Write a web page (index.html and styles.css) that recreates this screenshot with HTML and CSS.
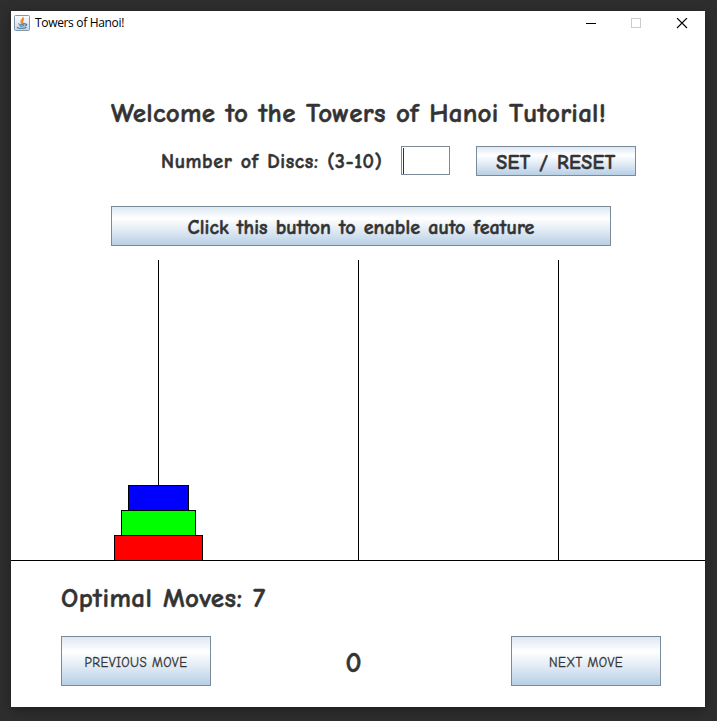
FILE: index.html
```html
<!DOCTYPE html>
<html lang="en">
<head>
<meta charset="utf-8">
<title>Towers of Hanoi!</title>
<link rel="stylesheet" href="styles.css">
</head>
<body>
<div class="window">
  <header class="titlebar">
    <svg class="app-icon" width="16" height="16" viewBox="0 0 16 16">
      <defs><linearGradient id="tile" x2="0" y2="1"><stop offset="0" stop-color="#fff"/><stop offset="1" stop-color="#c3d5e3"/></linearGradient></defs>
      <rect x=".5" y=".5" width="15" height="15" rx="1" fill="url(#tile)" stroke="#8299ac"/>
      <path d="M9 2c1 2-3 3-2 5l1 1M10 4C8 5 8 6 9 8" fill="none" stroke="#ee8227" stroke-width="1.2"/>
      <path d="M5 8.500c-1 1 5 1 6 0M5.500 10.500c1 .7 3 .7 4.500 0M3.500 12c-1 1.700 8 1.700 9 .3M11 9c3-.5 1.500 2-.5 2" fill="none" stroke="#41708f" stroke-width="1.100"/>
    </svg>
    <span class="caption">Towers of Hanoi!</span>
    <svg class="controls" width="103" height="11" viewBox="0 0 103 11" shape-rendering="crispEdges">
      <path d="M0 5.500h10" stroke="#000"/>
      <rect x="45.500" y=".5" width="9" height="9" fill="none" stroke="#ccc"/>
      <path d="M91 0l10 10M101 0L91 10" stroke="#000" stroke-width="1.100" shape-rendering="auto"/>
    </svg>
  </header>
  <main>
    <h1 class="title">Welcome to the Towers of Hanoi Tutorial!</h1>
    <div class="settings">
      <label class="discs-label" for="discs">Number of Discs: (3-10)</label>
      <div class="field" id="discs"><span class="caret"></span></div>
      <button class="button set"><span>SET / RESET</span></button>
    </div>
    <button class="button auto"><span>Click this button to enable auto feature</span></button>
    <section class="board">
      <div class="tower">
        <div class="peg"></div>
        <div class="disc blue"></div>
        <div class="disc green"></div>
        <div class="disc red"></div>
      </div>
      <div class="tower"><div class="peg"></div></div>
      <div class="tower"><div class="peg"></div></div>
    </section>
    <div class="optimal">Optimal Moves: 7</div>
    <div class="moves">
      <button class="button move"><span class="prev">PREVIOUS MOVE</span></button>
      <span class="count">0</span>
      <button class="button move"><span class="next">NEXT MOVE</span></button>
    </div>
  </main>
</div>
</body>
</html>
```
FILE: styles.css
```css
* { box-sizing: border-box; }
body {
  margin: 0;
  height: 721px;
  padding: 11px 12px 14px 11px;
  overflow: hidden;
  background: #2e2e2e;
  color: #333;
  font-family: "Comic Sans MS", "Comic Neue", "Noto Sans", sans-serif;
  font-weight: 700;
  -webkit-text-stroke: .5px #333;
}
.window {
  width: 694px;
  height: 696px;
  background: #fff;
  box-shadow: 0 3px 12px rgba(0, 0, 0, .35);
}
.titlebar {
  display: flex;
  align-items: center;
  height: 24px;
  padding-left: 3px;
  color: #000;
  font: 12px/16px "Segoe UI", "Open Sans", sans-serif;
  -webkit-text-stroke: 0;
}
.caption { margin-left: 5px; letter-spacing: -.33px; white-space: nowrap; }
.controls { margin: 0 16px 0 auto; }
.title {
  margin: 60px 0 0 100px;
  font-size: 27px;
  line-height: 38px;
  letter-spacing: .25px;
  word-spacing: .4px;
  white-space: nowrap;
}
.settings {
  display: flex;
  height: 30px;
  margin: 13px 0 0 150px;
}
.discs-label {
  width: 240px;
  font-size: 20px;
  line-height: 32px;
  letter-spacing: .6px;
  word-spacing: .8px;
  white-space: nowrap;
}
.field {
  width: 49px;
  height: 29px;
  padding: 1px;
  border: 1px solid #7a8a99;
}
.caret { display: block; width: 1px; height: 26px; background: #333; }
.button {
  display: flex;
  align-items: center;
  justify-content: center;
  padding: 0;
  border: 1px solid #7a8a99;
  border-radius: 0;
  background: linear-gradient(#dde8f3, #fff 30%, #dde8f3 65%, #b8cfe5);
  color: #333;
  font: inherit;
  font-size: 20px;
  line-height: 24px;
  white-space: nowrap;
}
.button span { padding-top: 3px; }
.set { width: 160px; height: 30px; margin-left: 26px; letter-spacing: .4px; word-spacing: 1px; }
.auto { width: 500px; height: 40px; margin: 30px 0 0 100px; letter-spacing: .1px; word-spacing: .8px; }
.board {
  display: flex;
  gap: 99px;
  height: 301px;
  margin-top: 14px;
  padding-left: 97px;
  border-bottom: 1px solid #000;
}
.tower {
  display: flex;
  flex-direction: column;
  align-items: center;
  width: 101px;
  height: 301px;
}
.peg { flex: 1; width: 1px; background: #000; }
.disc { height: 26px; margin-bottom: -1px; border: 1px solid #000; }
.disc:last-child { margin-bottom: 0; }
.blue { width: 61px; background: #00f; }
.green { width: 75px; background: #0f0; }
.red { width: 89px; background: #f00; }
.optimal {
  margin: 19px 0 0 50px;
  font-size: 27px;
  line-height: 38px;
  letter-spacing: .45px;
  word-spacing: .5px;
}
.moves {
  display: flex;
  justify-content: space-between;
  align-items: center;
  width: 600px;
  height: 50px;
  margin: 18px 0 0 50px;
}
.button.move {
  width: 150px;
  height: 50px;
  font-size: 13px;
  font-weight: 400;
  letter-spacing: .45px;
  -webkit-text-stroke: .3px #333;
}
.count { margin-right: 15px; padding-top: 4px; font-size: 28px; line-height: 36px; }
```
